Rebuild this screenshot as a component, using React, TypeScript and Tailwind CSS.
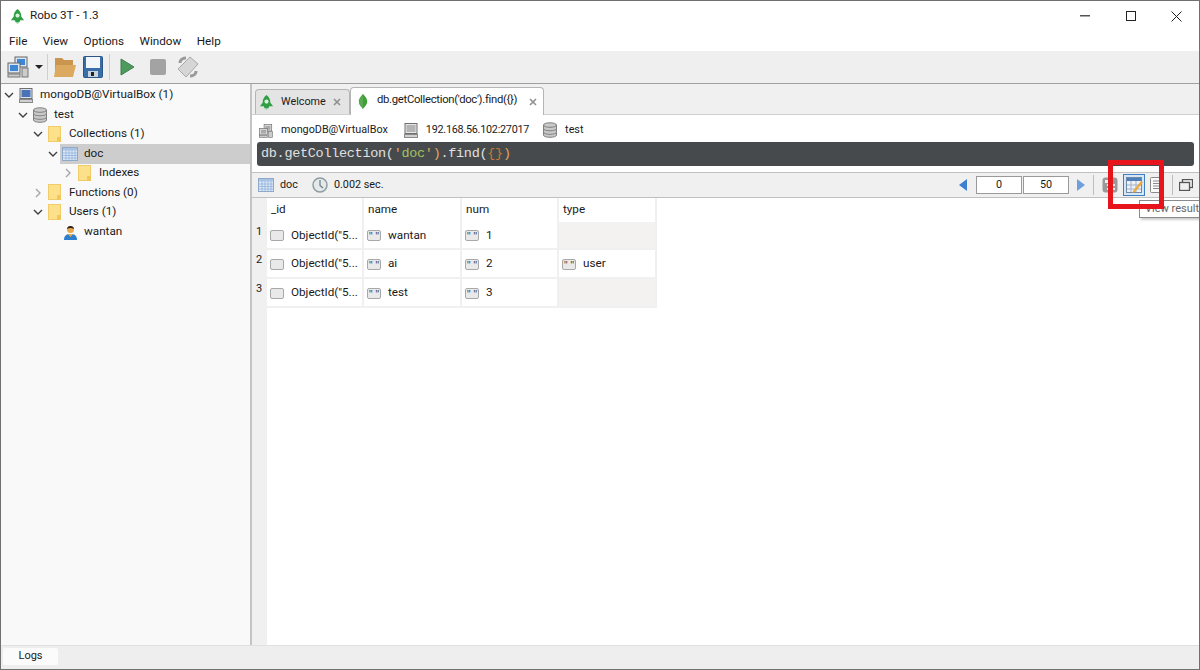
import React from "react";

const Chevron = ({ open, light }: { open?: boolean; light?: boolean }) => (
  <svg width="10" height="10" viewBox="0 0 10 10" className="shrink-0">
    <path
      d={open ? "M1 3 L5 7 L9 3" : "M3 1 L7 5 L3 9"}
      fill="none"
      stroke={light ? "#a6a6a6" : "#404040"}
      strokeWidth="1.4"
    />
  </svg>
);

const RoboLogo = ({ size = 16 }: { size?: number }) => (
  <svg width={size} height={size} viewBox="0 0 16 16" className="shrink-0">
    <path d="M8 0 C10.500 2 12.500 5 12 8 L15 12 L11 12 L10 14 L6 14 L5 12 L1 12 L4 8 C3.500 5 5.500 2 8 0Z" fill="#2f9e44" />
    <circle cx="8" cy="7" r="2.200" fill="#d8f3dc" />
    <path d="M6 14 L10 14 L8 16Z" fill="#86c995" />
  </svg>
);

const Leaf = () => (
  <svg width="10" height="15" viewBox="0 0 10 15">
    <path d="M5 0 C8 3 10 6 9 9 C8 12 6 13 5 15 C4 13 2 12 1 9 C0 6 2 3 5 0Z" fill="#3fa037" />
    <path d="M5 0 C3 3 1 6 1 9 C2 12 4 13 5 15Z" fill="#58aa50" />
  </svg>
);

const Folder = () => (
  <svg width="14" height="17" viewBox="0 0 14 17" className="shrink-0">
    <rect x="0.500" y="0.500" width="12" height="15" fill="#fde08a" stroke="#f0cc6a" />
    <rect x="9" y="11" width="4" height="5" fill="#f1c65a" />
  </svg>
);

const TableIcon = ({ size = 16 }: { size?: number }) => (
  <svg width={size} height={size * 0.875} viewBox="0 0 16 14" className="shrink-0">
    <rect x="0.500" y="0.500" width="15" height="13" fill="#dfeaf7" stroke="#8fa9c9" />
    <rect x="1" y="1" width="14" height="2.500" fill="#a9c3e4" />
    <path d="M4 3v10M7 3v10M10 3v10M13 3v10M1 6h14M1 8.500h14M1 11h14" stroke="#8fb0da" strokeWidth="0.800" />
  </svg>
);

const DbIcon = ({ size = 14 }: { size?: number }) => (
  <svg width={size} height={size * 1.15} viewBox="0 0 14 16" className="shrink-0">
    <path d="M0.500 3 C0.500 0 13.500 0 13.500 3 V13 C13.500 16 0.500 16 0.500 13Z" fill="#c9c9c9" stroke="#808080" />
    <path d="M0.500 3 C0.500 6 13.500 6 13.500 3 M0.500 6.500 C0.500 9.500 13.500 9.500 13.500 6.500 M0.500 10 C0.500 13 13.500 13 13.500 10" fill="none" stroke="#808080" />
  </svg>
);

const MonitorIcon = ({ gray }: { gray?: boolean }) => (
  <svg width="14" height="15" viewBox="0 0 14 15" className="shrink-0">
    <rect x="1" y="0.500" width="12" height="10" fill={gray ? "#e6e6e6" : "#dce3ee"} stroke="#6f6f6f" />
    <rect x="2.500" y="2" width="9" height="7" fill={gray ? "#b4b4b4" : "#4a74b8"} />
    <rect x="0.500" y="11.500" width="13" height="3" fill="#d0d0d0" stroke="#8a8a8a" />
  </svg>
);

const ConnectIcon = ({ gray }: { gray?: boolean }) => (
  <svg width={gray ? 14 : 22} height={gray ? 14 : 22} viewBox="0 0 22 22" className="shrink-0">
    <rect x="8" y="1" width="12" height="10" fill={gray ? "#ddd" : "#dbe6f3"} stroke="#666" />
    <rect x="10" y="3" width="8" height="6" fill={gray ? "#aaa" : "#3f87d6"} />
    <rect x="1" y="7" width="12" height="10" fill={gray ? "#ddd" : "#dbe6f3"} stroke="#666" />
    <rect x="3" y="9" width="8" height="6" fill={gray ? "#aaa" : "#3f87d6"} />
    <rect x="1" y="18" width="12" height="3" fill="#ccc" stroke="#777" />
    <rect x="15" y="12" width="6" height="9" fill="#ccc" stroke="#777" />
  </svg>
);

const UserIcon = () => (
  <svg width="15" height="16" viewBox="0 0 15 16" className="shrink-0">
    <path d="M1 16 C1 11 4 10 7.500 10 C11 10 14 11 14 16Z" fill="#2f7fd1" />
    <path d="M5 10 L7.500 13 L10 10Z" fill="#e8b04a" />
    <circle cx="7.500" cy="5.500" r="3.500" fill="#e8a94e" />
    <path d="M4 5 C4 1 11 1 11 5 C9 3.500 6 3.500 4 5Z" fill="#222" />
  </svg>
);

const TypeBadge = ({ quotes }: { quotes?: boolean }) => (
  <span className="flex h-[11px] w-[14px] shrink-0 items-start justify-center overflow-hidden rounded-[2px] border border-[#a8a8a8] bg-[#e9e9e9] font-['Liberation_Sans',sans-serif] text-[10px] leading-[12px] text-[#444]">
    {quotes ? '" "' : ""}
  </span>
);

const TreeRow = ({
  indent,
  chevron,
  icon,
  label,
  selected,
}: {
  indent: string;
  chevron?: "open" | "closed";
  icon: React.ReactNode;
  label: string;
  selected?: boolean;
}) => (
  <div className={`flex h-[19.500px] items-center ${indent}`}>
    <span className="flex w-[14px] shrink-0 justify-center">
      {chevron && <Chevron open={chevron === "open"} light={chevron === "closed"} />}
    </span>
    <div className={`flex h-full flex-1 items-center ${selected ? "bg-[#cdcdcd]" : ""}`}>
      <span className="ml-[1px] flex w-[18px] justify-center">{icon}</span>
      <span className="ml-[5px] text-[11.700px] text-[#1a1a1a]">{label}</span>
    </div>
  </div>
);

const Cell = ({
  value,
  quotes,
  className,
  empty,
}: {
  value?: string;
  quotes?: boolean;
  className?: string;
  empty?: boolean;
}) => (
  <div className={`flex items-center gap-[7px] border-b-2 border-r-2 border-[#f0f0f0] pl-[3px] pt-px text-[11.700px] ${empty ? "bg-[#f3f2f1]" : "bg-white"} ${className ?? ""}`}>
    {!empty && <TypeBadge quotes={quotes} />}
    {!empty && <span className="whitespace-nowrap">{value}</span>}
  </div>
);

const rows = [
  { n: "1", name: "wantan", num: "1", type: "" },
  { n: "2", name: "ai", num: "2", type: "user" },
  { n: "3", name: "test", num: "3", type: "" },
];

export default function App() {
  return (
    <div className="relative flex h-[670px] w-[1200px] flex-col overflow-hidden border-x border-t border-[#707070] bg-[#f0f0f0] font-['Roboto','Open_Sans',sans-serif] text-[#1a1a1a]">
      {/* Title bar */}
      <div className="flex h-[29px] items-center bg-white pl-[9px] pt-px">
        <RoboLogo size={15} />
        <span className="ml-[5px] text-[11.700px]">Robo 3T - 1.3</span>
        <div className="ml-auto flex items-center text-[#222]">
          <svg width="10" height="2" viewBox="0 0 10 2" className="mr-[36px]"><rect width="10" height="1.500" fill="#555" /></svg>
          <svg width="10" height="10" viewBox="0 0 10 10" className="mr-[35px]"><rect x="0.500" y="0.500" width="9" height="9" fill="none" stroke="#222" /></svg>
          <svg width="11" height="11" viewBox="0 0 11 11" className="mr-[17px]"><path d="M0.500 0.500 L10.500 10.500 M10.500 0.500 L0.500 10.500" stroke="#222" /></svg>
        </div>
      </div>

      {/* Menu bar */}
      <div className="flex h-[21px] items-center gap-[15.500px] bg-white pl-[8px] pt-[2px] text-[11.700px]">
        <span>File</span>
        <span>View</span>
        <span>Options</span>
        <span>Window</span>
        <span>Help</span>
      </div>

      {/* Toolbar */}
      <div className="flex h-[33px] items-center border-b border-[#a0a0a0] bg-[#efefef] pl-[6px]">
        <ConnectIcon />
        <svg width="8" height="4" viewBox="0 0 8 4" className="ml-[6px]"><path d="M0 0 H8 L4 4Z" fill="#222" /></svg>
        <span className="ml-[4px] h-[26px] w-px bg-[#cfcfcf]" />
        <svg width="23" height="22" viewBox="0 0 23 22" className="ml-[5px]">
          <path d="M2 2 L9 2 L11 4 L20 4 L20 20 L2 20Z" fill="#c9954f" />
          <path d="M3 9 L23 9 L20 21 L1 21Z" fill="#dba95f" />
        </svg>
        <svg width="20" height="22" viewBox="0 0 20 22" className="ml-[7px]">
          <rect x="0.500" y="0.500" width="19" height="21" rx="1" fill="#3b6ea8" stroke="#2c5688" />
          <rect x="3" y="1" width="14" height="11" fill="#f3f6fa" />
          <rect x="5" y="15" width="10" height="6" fill="#c9d3de" />
          <rect x="8" y="16" width="3" height="4" fill="#222" />
        </svg>
        <span className="ml-[6px] h-[26px] w-px bg-[#cfcfcf]" />
        <svg width="15" height="18" viewBox="0 0 15 18" className="ml-[10px]"><path d="M1 1 L14 9 L1 17Z" fill="#4c9a5c" stroke="#3d7f4b" /></svg>
        <span className="ml-[15px] h-[16px] w-[16px] rounded-[2px] bg-[#a3a3a3]" />
        <svg width="24" height="24" viewBox="0 0 24 24" className="ml-[10px]">
          <path d="M2 14 L14 2 L22 9 L10 22Z" fill="#d6d6d6" stroke="#a8a8a8" />
          <path d="M4 8 C4 4 8 3 10 3 M20 16 C20 20 16 21 14 21" fill="none" stroke="#9a9a9a" strokeWidth="3" />
        </svg>
      </div>

      {/* Main */}
      <div className="flex min-h-0 flex-1">
        {/* Tree */}
        <div className="w-[249px] shrink-0 bg-[#f9f9f9] pt-[1.500px]">
          <div className="flex h-full flex-col">
            <TreeRow indent="pl-[1px]" chevron="open" icon={<MonitorIcon />} label="mongoDB@VirtualBox (1)" />
            <TreeRow indent="pl-[15px]" chevron="open" icon={<DbIcon />} label="test" />
            <TreeRow indent="pl-[30px]" chevron="open" icon={<Folder />} label="Collections (1)" />
            <TreeRow indent="pl-[45px]" chevron="open" icon={<TableIcon />} label="doc" selected />
            <TreeRow indent="pl-[60px]" chevron="closed" icon={<Folder />} label="Indexes" />
            <TreeRow indent="pl-[30px]" chevron="closed" icon={<Folder />} label="Functions (0)" />
            <TreeRow indent="pl-[30px]" chevron="open" icon={<Folder />} label="Users (1)" />
            <TreeRow indent="pl-[45px]" icon={<UserIcon />} label="wantan" />
          </div>
        </div>
        <div className="w-[2px] shrink-0 bg-[#c4c4c4]" />

        {/* Right side */}
        <div className="flex min-w-0 flex-1 flex-col">
          {/* Tabs */}
          <div className="flex h-[31px] items-end border-b border-[#d0d0d0] bg-[#f0f0f0] pl-[3px]">
            <div className="flex h-[25px] w-[95px] items-center rounded-t-[4px] border border-b-0 border-[#b5b5b5] bg-[#e4e4e4] pl-[3px] text-[10.800px]">
              <RoboLogo size={15} />
              <span className="ml-[7px]">Welcome</span>
              <svg width="8" height="8" viewBox="0 0 8 8" className="ml-[7px]"><path d="M1 1 L7 7 M7 1 L1 7" stroke="#8f8f8f" strokeWidth="1.600" /></svg>
            </div>
            <div className="-mb-px flex h-[28px] w-[194px] items-center rounded-t-[4px] border border-b-0 border-[#b5b5b5] bg-white pl-[7px] text-[11.300px]">
              <Leaf />
              <span className="ml-[9px] -translate-y-[1px] tracking-[-0.300px]">db.getCollection('doc').find({"{}"})</span>
              <svg width="8" height="8" viewBox="0 0 8 8" className="ml-[12px]"><path d="M1 1 L7 7 M7 1 L1 7" stroke="#8f8f8f" strokeWidth="1.600" /></svg>
            </div>
          </div>

          {/* Query panel */}
          <div className="bg-white pb-[6px] pl-[5px] pr-[5px]">
            <div className="flex h-[27px] items-center pl-[2px] pt-[4px] text-[10.800px]">
              <ConnectIcon gray />
              <span className="ml-[8px]">mongoDB@VirtualBox</span>
              <span className="ml-[16px]"><MonitorIcon gray /></span>
              <span className="ml-[8px] tracking-[-0.250px]">192.168.56.102:27017</span>
              <span className="ml-[14px]"><DbIcon size={14} /></span>
              <span className="ml-[8px]">test</span>
            </div>
            <div className="flex h-[24px] items-center rounded-[3px] bg-[#464a4d] pl-[4px] font-['Liberation_Mono',monospace] text-[13.500px] tracking-[-0.300px] text-[#e0e0e0]">
              <span>db.getCollection(</span>
              <span className="text-[#e0a458]">'</span>
              <span className="text-[#a5c261]">doc</span>
              <span className="text-[#e0a458]">'</span>
              <span className="text-[#e0a458]">)</span>
              <span>.find(</span>
              <span className="text-[#cc7832]">{"{}"}</span>
              <span className="text-[#e0a458]">)</span>
            </div>
          </div>

          {/* Results toolbar */}
          <div className="flex h-[26px] items-center border-y border-[#c0c0c0] bg-[#f0f0f0] pl-[6px] text-[10.800px]">
            <TableIcon size={16} />
            <span className="ml-[6px]">doc</span>
            <svg width="16" height="16" viewBox="0 0 16 16" className="ml-[14px]">
              <circle cx="8" cy="8" r="7" fill="#e4e9ea" stroke="#8d9ea1" strokeWidth="1.500" />
              <path d="M8 3 V8.500 L11 11" fill="none" stroke="#6d7d80" strokeWidth="1.200" />
            </svg>
            <span className="ml-[6px]">0.002 sec.</span>

            <div className="ml-auto flex items-center">
              <svg width="8" height="12" viewBox="0 0 8 12"><path d="M8 0 V12 L0 6Z" fill="#3f7fd1" /></svg>
              <span className="ml-[9px] flex h-[18px] w-[46px] items-center justify-center border border-[#9a9a9a] bg-white">0</span>
              <span className="ml-px flex h-[18px] w-[46px] items-center justify-center border border-[#9a9a9a] bg-white">50</span>
              <svg width="8" height="12" viewBox="0 0 8 12" className="ml-[8px]"><path d="M0 0 V12 L8 6Z" fill="#6f9fdc" /></svg>
              <span className="ml-[8px] h-[20px] w-px bg-[#bdbdbd]" />
              <svg width="16" height="16" viewBox="0 0 16 16" className="ml-[8px]">
                <rect x="0.500" y="0.500" width="15" height="15" rx="3" fill="#9a9a9a" />
                <rect x="3" y="3" width="5" height="3" fill="#eee" />
                <rect x="5" y="7" width="8" height="2" fill="#eee" />
                <rect x="5" y="11" width="8" height="2" fill="#eee" />
              </svg>
              <span className="ml-[5px] flex h-[22px] w-[22px] items-center justify-center border border-[#3f7fc0] bg-[#d5e6f7]">
                <svg width="17" height="16" viewBox="0 0 17 16">
                  <rect x="0.500" y="0.500" width="15" height="15" fill="#eef2f7" stroke="#6f8aa8" />
                  <rect x="1" y="1" width="14" height="3" fill="#4f7fb8" />
                  <path d="M5 4v11M10 4v11M1 8h14M1 12h14" stroke="#9fb2c8" />
                  <path d="M7 14 L15 4 L17 5.500 L9 15 L6.500 16Z" fill="#eea83c" />
                </svg>
              </span>
              <svg width="13" height="16" viewBox="0 0 13 16" className="ml-[5px]">
                <rect x="0.500" y="0.500" width="12" height="15" rx="1" fill="#fafafa" stroke="#8a8a8a" />
                <path d="M3 4h7M3 6.500h7M3 9h7M3 11.500h7" stroke="#8a8a8a" />
              </svg>
              <span className="ml-[9px] h-[20px] w-px bg-[#bdbdbd]" />
              <svg width="14" height="12" viewBox="0 0 14 12" className="ml-[6px] mr-[6px]">
                <rect x="3.500" y="0.500" width="10" height="8" fill="#f0f0f0" stroke="#555" strokeWidth="1.300" />
                <rect x="0.500" y="3.500" width="10" height="8" fill="#f0f0f0" stroke="#555" strokeWidth="1.300" />
              </svg>
            </div>
          </div>

          {/* Results table */}
          <div className="min-h-0 flex-1 bg-white">
            <div className="flex h-full">
              <div className="flex w-[15px] flex-col bg-[#f0f0f0] text-[11px]">
                <div className="h-[24px]" />
                {rows.map((r, i) => (
                  <div key={r.n} className={`pl-[4px] pt-[2px] ${i === 0 ? "h-[28px]" : "h-[29px]"}`}>{r.n}</div>
                ))}
              </div>
              <div className="grid h-[110px] w-[390px] grid-cols-[97px_98px_97px_98px] grid-rows-[24px_28px_29px_29px] text-[11.700px]">
                {["_id", "name", "num", "type"].map((h) => (
                  <div key={h} className="border-r-2 border-[#f0f0f0] pl-[4px] pt-[3px]">{h}</div>
                ))}
                {rows.map((r) => (
                  <React.Fragment key={r.n}>
                    <Cell value='ObjectId("5...' />
                    <Cell value={r.name} quotes />
                    <Cell value={r.num} quotes />
                    {r.type ? <Cell value={r.type} quotes /> : <Cell empty />}
                  </React.Fragment>
                ))}
              </div>
            </div>
          </div>
        </div>
      </div>

      {/* Status bar */}
      <div className="flex h-[24px] items-start border-t border-[#e0e0e0] bg-[#eeeeee] pl-[2px] pt-[2px]">
        <div className="flex h-[17px] w-[55px] items-center justify-center rounded-[2px] bg-[#fbfbfb] text-[11px]">Logs</div>
      </div>
      <div className="h-px bg-[#707070]" />

      {/* Tooltip */}
      <div className="absolute left-[1138px] top-[199px] h-[18px] w-[70px] border border-[#8a8a8a] bg-white pl-[5px] text-[11px] leading-[16px] text-[#666] whitespace-nowrap shadow-[2px_2px_2px_rgba(0,0,0,0.2)]">
        View result
      </div>

      {/* Red annotation */}
      <div className="absolute left-[1107px] top-[159px] h-[49px] w-[56px] border-[5px] border-[#e8141c]" />
    </div>
  );
}
